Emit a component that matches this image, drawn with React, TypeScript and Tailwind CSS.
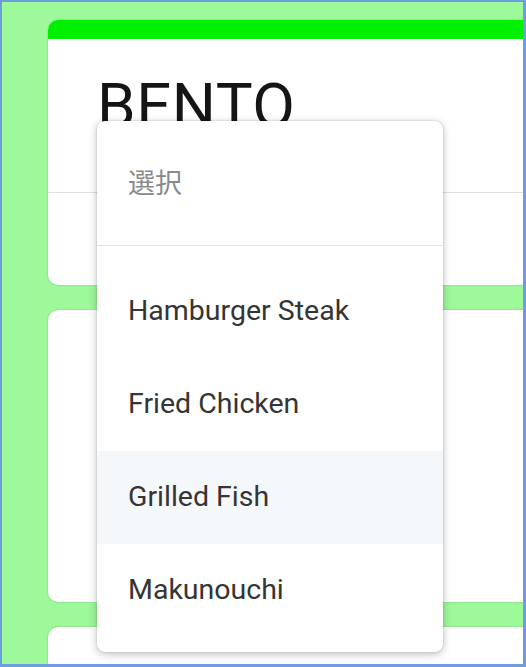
import { useState } from "react";

const OPTIONS = ["Hamburger Steak", "Fried Chicken", "Grilled Fish", "Makunouchi"];

export default function App() {
  const [hovered, setHovered] = useState(2);

  return (
    <div
      className="relative h-[667px] w-[526px] overflow-hidden border-t-2 border-l-2 border-r-[3px] border-b-[3px] border-[#6b9de0] bg-[#9ef99b]"
      style={{ fontFamily: "Roboto, 'Noto Sans CJK JP', sans-serif" }}
    >
      <div className="flex w-[500px] flex-col gap-[25px] pl-[46px] pt-[18px]">
        {/* question card */}
        <section className="h-[265px] w-[500px] shrink-0 overflow-hidden rounded-[10px] bg-white shadow-[0_0_2px_rgba(0,0,0,0.25)]">
          <div className="h-[19px] bg-[#00f000]" />
          <div className="h-[153px] pl-[49px] pt-[36px]">
            <h1 className="text-[62px] leading-none font-normal tracking-[0.5px] text-[#151515]">BENTO</h1>
          </div>
          <div className="h-px bg-[#e0e0e0]" />
        </section>

        <section className="h-[292px] w-[500px] shrink-0 rounded-[10px] bg-white shadow-[0_0_2px_rgba(0,0,0,0.25)]" />
        <section className="h-[200px] w-[500px] shrink-0 rounded-[10px] bg-white shadow-[0_0_2px_rgba(0,0,0,0.25)]" />
      </div>

      {/* open select menu */}
      <div className="absolute left-[95px] top-[119px] w-[346px] overflow-hidden rounded-[8px] bg-white shadow-[0_2px_8px_rgba(0,0,0,0.25),0_0_2px_rgba(0,0,0,0.2)]">
        <div className="flex h-[125px] items-center border-b border-[#e0e0e0] px-[31px] pt-[3px] text-[27px] text-[#8a8a8a]">
          選択
        </div>
        <ul className="pt-[19px] pb-[15px]">
          {OPTIONS.map((o, i) => (
            <li
              key={o}
              onMouseEnter={() => setHovered(i)}
              className={`flex h-[93px] items-center px-[31px] text-[28.5px] text-[#353535] ${i === hovered ? "bg-[#f5f8fb]" : ""}`}
            >
              {o}
            </li>
          ))}
        </ul>
      </div>
    </div>
  );
}
